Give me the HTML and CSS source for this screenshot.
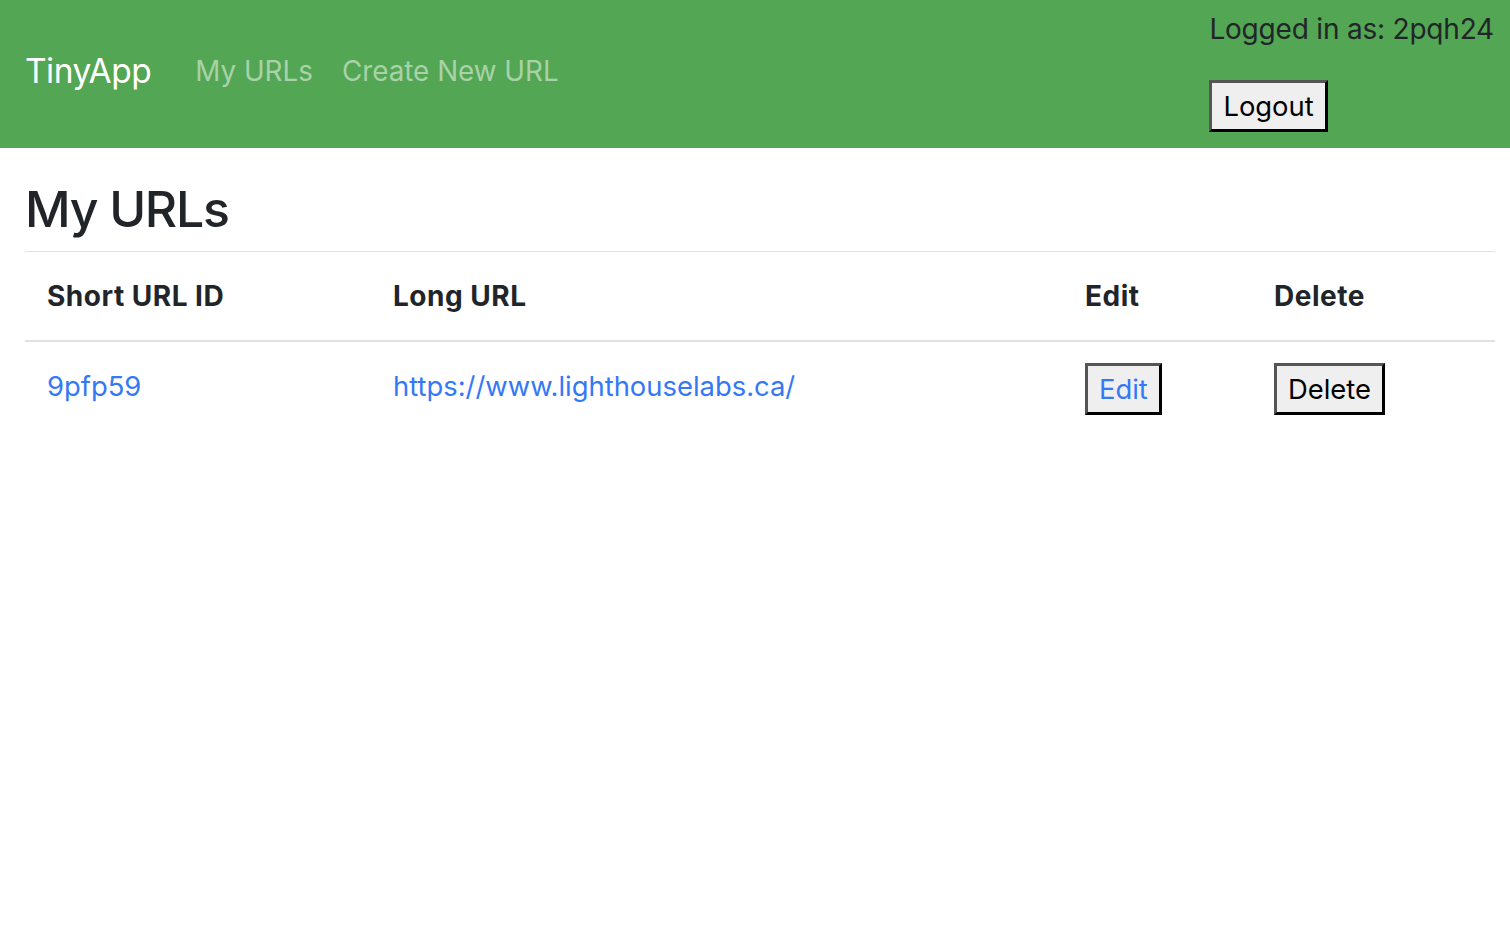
FILE: index.html
```html
<!DOCTYPE html>
<html>
<head>
<meta charset="utf-8">
<title>TinyApp</title>
<link rel="stylesheet" href="styles.css">
</head>
<body>
<nav class="navbar">
  <div class="nav-left">
    <a class="brand" href="#">TinyApp</a>
    <a class="nav-link" href="#">My URLs</a>
    <a class="nav-link" href="#">Create New URL</a>
  </div>
  <div class="nav-right">
    <div class="user">Logged in as: 2pqh24</div>
    <button class="btn">Logout</button>
  </div>
</nav>
<main class="main">
  <h1 class="title">My URLs</h1>
  <table class="table">
    <thead>
      <tr>
        <th class="c1">Short URL ID</th>
        <th class="c2">Long URL</th>
        <th class="c3">Edit</th>
        <th class="c4">Delete</th>
      </tr>
    </thead>
    <tbody>
      <tr>
        <td><a href="#">9pfp59</a></td>
        <td><a href="#">https://www.lighthouselabs.ca/</a></td>
        <td><button class="btn link">Edit</button></td>
        <td><button class="btn">Delete</button></td>
      </tr>
    </tbody>
  </table>
</main>
</body>
</html>
```
FILE: styles.css
```css
* { box-sizing: border-box; }
body {
  margin: 0;
  font-family: Inter, "Liberation Sans", sans-serif;
  font-size: 27.4px;
  line-height: 1.5;
  color: #212529;
  background: #fff;
}
a { text-decoration: none; color: #3478f6; }
.navbar {
  background: #53a653;
  height: 148px;
  display: flex;
  justify-content: space-between;
  padding: 0 16px 0 25px;
}
.nav-left {
  display: flex;
  align-items: center;
  gap: 29px;
  padding-bottom: 5px;
}
.brand {
  color: #fff;
  font-size: 33.5px;
  margin-right: 15px;
  letter-spacing: -0.5px;
}
.nav-link {
  color: #a9d2a9;
  font-size: 27.8px;
}
.nav-right {
  display: flex;
  flex-direction: column;
  align-items: flex-start;
  padding-top: 9px;
  gap: 31px;
}
.user { line-height: 40px; font-size: 28px; letter-spacing: -0.2px; }
.btn {
  font-family: inherit;
  font-size: 27.4px;
  line-height: 40px;
  height: 52px;
  padding: 0 11px;
  background: #efefef;
  color: #000;
  border: 3px solid;
  border-color: #555 #000 #000 #555;
  border-radius: 0;
}
.btn.link { color: #3478f6; }
.main { padding: 0 15px 0 25px; }
.title {
  margin: 0;
  font-size: 50px;
  font-weight: 500;
  line-height: 64px;
  padding: 177px 0 10px;
  margin-top: -148px;
  letter-spacing: -1.3px;
}
.table {
  width: 100%;
  border-collapse: collapse;
}
.table th, .table td {
  text-align: left;
  vertical-align: top;
  border-top: 1px solid #dee2e6;
  padding: 23px 22px;
  line-height: 42px;
}
.table th { font-weight: 700; font-size: 28px; letter-spacing: 0.5px; border-bottom: 2px solid #dee2e6; }
.table td { padding-top: 21px; padding-bottom: 21px; border-top: none; }
.table td a { display: inline-block; padding-top: 2px; }
.c1 { width: 346px; }
.c2 { width: 692px; }
.c3 { width: 189px; }
```
